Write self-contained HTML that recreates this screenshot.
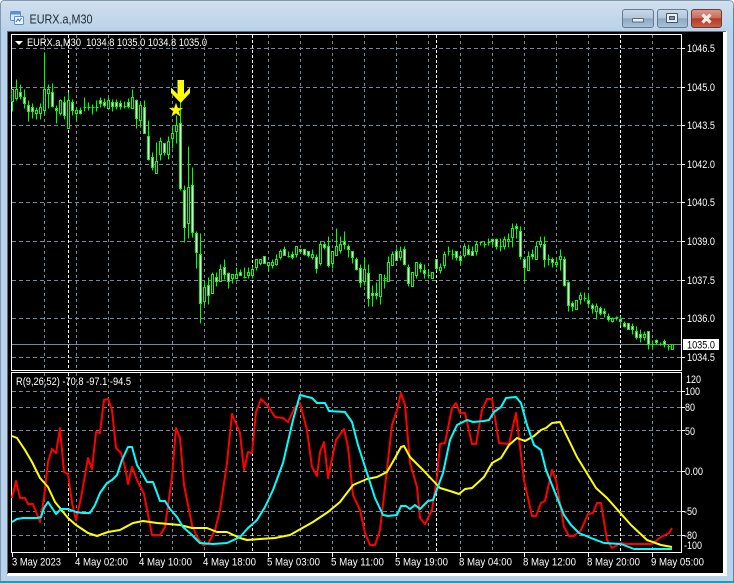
<!DOCTYPE html>
<html><head><meta charset="utf-8"><style>
html,body{margin:0;padding:0;background:#fff;width:734px;height:583px;overflow:hidden}
svg{display:block}
text{font-family:"Liberation Sans",sans-serif;font-size:11px;fill:#fff}
</style></head><body>
<svg width="734" height="583" viewBox="0 0 734 583" xmlns="http://www.w3.org/2000/svg">
<defs>
<linearGradient id="tb" x1="0" y1="0" x2="0" y2="1"><stop offset="0" stop-color="#d7e3ee"/><stop offset=".06" stop-color="#cfdeec"/><stop offset="1" stop-color="#b9d2ea"/></linearGradient>
<linearGradient id="bt" x1="0" y1="0" x2="0" y2="1"><stop offset="0" stop-color="#c9d9e9"/><stop offset=".48" stop-color="#b2c6db"/><stop offset=".5" stop-color="#8ea6bf"/><stop offset="1" stop-color="#a9c3dc"/></linearGradient>
<linearGradient id="cl" x1="0" y1="0" x2="0" y2="1"><stop offset="0" stop-color="#dc9a8e"/><stop offset=".48" stop-color="#c86a5a"/><stop offset=".5" stop-color="#b23a26"/><stop offset="1" stop-color="#c9604a"/></linearGradient>
</defs>
<rect width="734" height="583" fill="#fff"/>
<path d="M4 .5H729Q733.5 .5 733.5 5V582.5H.5V5Q.5 .5 4 .5Z" fill="#b9d2ea" stroke="#7d99b3"/>
<path d="M4 1H729Q733 1 733 5V32H1V5Q1 1 4 1Z" fill="url(#tb)"/>
<rect x="0" y="581" width="734" height="2" fill="#1f9cb0"/>
<rect x="733" y="8" width="1" height="575" fill="#2a9db5"/>
<rect x="7" y="31" width="720" height="545" fill="#fff"/>
<rect x="7" y="31" width="719" height="1" fill="#5d6d7e"/>
<rect x="7" y="31" width="1" height="543" fill="#5d6d7e"/>
<rect x="8" y="32" width="715" height="541" fill="#000"/>

<!-- title -->
<g>
<rect x="10.5" y="11.5" width="10" height="9" rx="1" fill="#dbe9f8" stroke="#5b8fd0"/>
<rect x="11" y="12" width="9" height="2.5" fill="#5b8fd0"/>
<rect x="14.5" y="16.5" width="9" height="8" rx="1" fill="#f2f7fc" stroke="#5b8fd0"/>
<path d="M16 22l2-3 1.5 2 2-3" fill="none" stroke="#3c70b8"/>
</g>
<text x="29.5" y="23.5" style="font-size:13px;fill:#222b35" textLength="63" lengthAdjust="spacingAndGlyphs">EURX.a,M30</text>

<!-- buttons -->
<rect x="622.5" y="9.5" width="31" height="18" rx="2.5" fill="url(#bt)" stroke="#66798f"/>
<rect x="632.5" y="18.5" width="11" height="3.5" rx=".5" fill="#e9eef3" stroke="#56677a"/>
<rect x="657.5" y="9.5" width="30" height="18" rx="2.5" fill="url(#bt)" stroke="#66798f"/>
<rect x="666.5" y="13.5" width="11" height="9" rx=".5" fill="#e9eef3" stroke="#44566a"/>
<rect x="669.5" y="16.5" width="5" height="3" fill="#7f95ab" stroke="#44566a"/>
<rect x="691.5" y="9.5" width="30" height="18" rx="2.5" fill="url(#cl)" stroke="#6a3a34"/>
<path d="M702.5 14.5l8 8M710.5 14.5l-8 8" fill="none" stroke="#f3eeea" stroke-width="3.2"/>

<!-- panels -->
<path d="M11.5 34.5H681.5V370.5H11.5ZM11.5 372.5H681.5V552.5H11.5Z" fill="none" stroke="#fff"/>

<!-- grid -->
<g fill="none" stroke="#778899" stroke-dasharray="4 3">
<path d="M12 48.5H681M12 87.5H681M12 125.5H681M12 164.5H681M12 202.5H681M12 241.5H681M12 280.5H681M12 318.5H681M12 357.5H681"/>
<path d="M12 391.5H681M12 407.5H681M12 430.5H681M12 471.5H681M12 511.5H681M12 535.5H681"/>
<path stroke-dasharray="3 3" d="M44.5 35V370M76.5 35V370M108.5 35V370M140.5 35V370M172.5 35V370M204.5 35V370M236.5 35V370M268.5 35V370M300.5 35V370M332.5 35V370M364.5 35V370M396.5 35V370M428.5 35V370M460.5 35V370M492.5 35V370M524.5 35V370M556.5 35V370M588.5 35V370M652.5 35V370"/>
<path stroke-dasharray="3 3" d="M44.5 373V552M76.5 373V552M108.5 373V552M140.5 373V552M172.5 373V552M204.5 373V552M236.5 373V552M268.5 373V552M300.5 373V552M332.5 373V552M364.5 373V552M396.5 373V552M428.5 373V552M460.5 373V552M492.5 373V552M524.5 373V552M556.5 373V552M588.5 373V552M652.5 373V552"/>
<path stroke="#fff" stroke-dasharray="3 2" d="M68.5 35V370M252.5 35V370M436.5 35V370M620.5 35V370M68.5 373V552M252.5 373V552M436.5 373V552M620.5 373V552"/>
</g>
<path d="M12 344.5H681" stroke="#778899"/>

<!-- candles -->
<g transform="translate(.5 .5)">
<path fill="none" stroke="#0f0" d="M12 89V111M16 79V100M20 84V99M24 89V108M28 100V121M32 103V118M36 107V119M40 103V119M44 52V115M48 84V108M52 83V107M56 105V123M60 99V115M64 96V119M68 92V128M72 99V115M76 107V120M80 107V114M84 97V111M88 102V110M92 104V114M96 100V111M100 97V107M104 98V107M108 97V108M112 99V111M116 99V109M120 100V109M124 101V108M128 98V108M132 89V107M136 99V128M140 102V125M144 100V133M148 120V160M152 152V170M156 142V173M160 137V160M164 143V155M168 136V159M172 125V148M176 115V143M180 100V190M184 185V242M188 146V238M192 167V237M196 231V268M200 233V323M204 280V305M208 277V304M212 272V293M216 272V286M220 264V281M224 259V279M228 272V288M232 274V283M236 267V278M240 269V275M244 267V278M248 267V278M252 266V278M256 259V270M260 259V265M264 256V263M268 262V271M272 259V268M276 254V265M280 249V259M284 246V255M288 251V257M292 251V259M296 246V257M300 249V253M304 249V255M308 251V257M312 249V259M316 254V273M320 241V265M324 241V249M328 236V267M332 251V268M336 228V255M340 236V253M344 231V249M348 244V257M352 251V263M356 257V270M360 264V287M364 258V285M368 264V306M372 285V306M376 282V299M380 274V304M384 274V288M388 256V281M392 251V265M396 248V260M400 246V260M404 246V265M408 264V286M412 272V286M416 262V278M420 262V272M424 264V278M428 269V278M432 272V278M436 259V270M440 263V273M444 251V268M448 246V255M452 249V259M456 251V260M460 254V265M464 243V257M468 244V255M472 246V255M476 241V255M480 241V245M484 241V247M488 238V245M492 238V246M496 238V249M500 238V251M504 236V249M508 233V247M512 223V247M516 223V238M520 226V259M524 257V281M528 251V270M532 249V259M536 241V259M540 236V247M544 236V267M548 254V265M552 257V267M556 257V267M560 249V270M564 256V286M568 281V311M572 301V311M576 300V309M580 292V304M584 292V301M588 294V307M592 303V313M596 303V319M600 306V315M604 308V317M608 313V321M612 317V322M616 316V320M620 316V325M624 321V327M628 323V329M632 323V334M636 326V339M640 329V342M644 331V340M648 331V349M652 340V348M656 339V344M660 342V345M664 339V347M668 344V350M672 344V349M83 107h3M87 107h3M91 107h3M95 107h3M123 106h3M243 277h3M287 256h3M383 278h3M427 275h3M447 251h3M451 254h3M479 242h3M483 244h3M487 242h3M499 246h3M547 259h3M583 298h3M615 317h3M651 344h3M659 344h3M667 346h3"/>
<path fill="#000" stroke="#0f0" d="M11 89h2v12h-2zM15 89h2v9h-2zM35 110h2v3h-2zM39 107h2v6h-2zM43 89h2v21h-2zM47 89h2v4h-2zM59 100h2v13h-2zM67 100h2v28h-2zM75 110h2v3h-2zM107 100h2v8h-2zM131 97h2v11h-2zM139 105h2v15h-2zM155 161h2v12h-2zM159 141h2v13h-2zM167 141h2v13h-2zM171 133h2v5h-2zM175 125h2v6h-2zM187 187h2v36h-2zM203 287h2v14h-2zM211 274h2v19h-2zM219 269h2v12h-2zM231 274h2v4h-2zM235 274h2v4h-2zM247 272h2v3h-2zM251 269h2v6h-2zM255 259h2v8h-2zM259 259h2v4h-2zM267 262h2v3h-2zM271 262h2v3h-2zM275 259h2v5h-2zM279 251h2v6h-2zM295 246h2v8h-2zM311 254h2v3h-2zM319 244h2v19h-2zM331 251h2v12h-2zM335 246h2v9h-2zM339 244h2v6h-2zM363 269h2v12h-2zM379 274h2v22h-2zM387 262h2v19h-2zM391 254h2v11h-2zM399 251h2v6h-2zM411 272h2v14h-2zM415 262h2v13h-2zM431 272h2v6h-2zM439 267h2v3h-2zM443 254h2v11h-2zM463 246h2v9h-2zM475 244h2v7h-2zM503 239h2v7h-2zM507 239h2v2h-2zM511 228h2v9h-2zM527 256h2v14h-2zM535 246h2v13h-2zM539 241h2v3h-2zM555 262h2v2h-2zM559 256h2v3h-2zM575 300h2v9h-2zM579 295h2v4h-2zM595 306h2v5h-2zM611 318h2v3h-2zM643 334h2v3h-2zM671 344h2v5h-2z"/>
<path fill="#fff" stroke="#0f0" d="M19 92h2v4h-2zM23 97h2v6h-2zM27 105h2v6h-2zM31 107h2v4h-2zM51 92h2v14h-2zM55 108h2v2h-2zM63 102h2v13h-2zM71 102h2v8h-2zM79 110h2v3h-2zM99 100h2v3h-2zM103 102h2v3h-2zM111 102h2v4h-2zM115 102h2v4h-2zM119 103h2v3h-2zM127 102h2v4h-2zM135 100h2v18h-2zM143 107h2v26h-2zM147 136h2v23h-2zM151 157h2v10h-2zM163 143h2v9h-2zM179 123h2v65h-2zM183 190h2v37h-2zM191 185h2v47h-2zM195 233h2v19h-2zM199 254h2v49h-2zM207 285h2v10h-2zM215 277h2v4h-2zM223 267h2v7h-2zM227 273h2v8h-2zM239 272h2v3h-2zM263 256h2v7h-2zM283 249h2v6h-2zM291 254h2v3h-2zM299 249h2v2h-2zM303 249h2v5h-2zM307 251h2v4h-2zM315 257h2v11h-2zM323 244h2v3h-2zM327 246h2v19h-2zM343 241h2v3h-2zM347 246h2v3h-2zM351 251h2v6h-2zM355 259h2v10h-2zM359 268h2v14h-2zM367 273h2v25h-2zM371 293h2v2h-2zM375 293h2v2h-2zM395 251h2v9h-2zM403 249h2v15h-2zM407 267h2v16h-2zM419 264h2v4h-2zM423 270h2v3h-2zM435 259h2v9h-2zM455 251h2v6h-2zM459 256h2v4h-2zM467 249h2v5h-2zM471 251h2v4h-2zM491 239h2v2h-2zM495 239h2v7h-2zM515 226h2v2h-2zM519 231h2v25h-2zM523 259h2v8h-2zM531 254h2v2h-2zM543 244h2v15h-2zM551 259h2v3h-2zM563 259h2v26h-2zM567 282h2v23h-2zM571 303h2v3h-2zM587 300h2v3h-2zM591 305h2v3h-2zM599 308h2v5h-2zM603 311h2v2h-2zM607 316h2v3h-2zM619 319h2v2h-2zM623 323h2v3h-2zM627 323h2v6h-2zM631 326h2v3h-2zM635 331h2v6h-2zM639 334h2v3h-2zM647 331h2v13h-2zM655 340h2v2h-2zM663 341h2v3h-2z"/>
</g>

<!-- arrow + star -->
<polygon points="177.5,80 184,80 184,94 190,87.5 190,93 180.7,103 171,93 171,87.5 177.5,94" fill="#ff0"/>
<polygon points="176,103 177.8,108 183,108 178.8,111.2 180.4,116.5 176,113.3 171.6,116.5 173.2,111.2 169,108 174.2,108" fill="#ff0" stroke="#b08a00" stroke-width=".4"/>

<!-- indicator lines -->
<g fill="none" stroke-width="2" stroke-linejoin="round">
<polyline stroke="#f00" points="12,498 16,481 20,498 25,498 28,504 33,504 40,522 44,498 48,462 52,449 56,453 60,428 64,472 68,474 72,503 76,520 81,498 85,475 88,458 92,469 96,432 100,433 104,400 108,399 112,410 116,448 121,453 125,467 128,484 132,467 137,480 144,494 152,535 160,535 165,527 172,477 176,428 180,438 184,485 192,525 197,537 203,545 208,544 215,530 220,510 227,463 232,414 240,433 244,470 248,452 252,453 256,412 261,399 268,406 275,417 283,418 288,422 295,407 300,403 307,430 312,467 317,476 320,452 324,442 328,478 336,440 344,429 348,447 353,495 360,510 365,533 370,545 375,545 380,530 385,487 392,425 397,410 401,393 405,405 410,463 417,487 420,518 425,524 432,510 437,477 440,444 445,443 452,408 456,403 460,413 465,413 472,444 476,444 482,410 487,399 492,399 499,443 509,444 516,413 524,480 532,516 536,516 541,503 545,501 552,470 556,480 564,527 569,536 574,536 581,530 588,514 593,513 597,503 601,503 607,540 612,548 621,543 627,544 641,544 652,544 661,537 669,533 672,528"/>
<polyline stroke="#ff0" points="12,436 17,438 25,450 32,462 40,478 48,487 55,502 68,518 76,525 88,533 97,536 108,532 120,530 133,523 143,521 157,523 180,525 192,528 207,528 217,532 227,532 240,538 247,540 260,539 275,538 290,535 313,522 328,512 340,502 353,485 367,479 377,477 387,472 395,458 401,447 404,446 410,457 423,470 440,488 450,491 459,494 465,489 472,488 484,477 492,463 501,458 509,445 517,438 525,441 534,436 541,430 546,428 552,423 560,422 577,457 596,488 607,498 631,525 647,540 661,545 672,547"/>
<polyline stroke="#0ff" points="12,522 17,519 23,518 37,518 41,517 44,508 48,502 52,508 56,514 61,509 68,509 76,512 83,513 90,513 95,505 100,493 107,483 112,480 117,475 122,460 128,447 132,447 137,465 142,473 147,482 153,482 160,501 165,501 170,509 177,517 183,527 192,535 200,543 213,544 227,543 240,537 248,528 257,520 265,507 273,490 283,463 293,420 300,395 312,398 317,403 325,403 329,411 345,412 352,422 358,445 367,473 375,498 383,515 388,516 397,515 401,506 406,506 410,509 415,505 420,509 428,501 433,500 443,473 450,440 457,425 467,420 473,422 484,421 489,420 494,412 501,407 506,398 516,397 521,403 527,425 534,445 541,450 546,470 556,495 564,515 571,525 579,533 591,538 604,543 621,544 634,549 672,549"/>
</g>

<!-- ticks -->
<path stroke="#fff" d="M682 48.5h3M682 87.5h3M682 125.5h3M682 164.5h3M682 202.5h3M682 241.5h3M682 280.5h3M682 318.5h3M682 357.5h3M682 391.5h3M682 407.5h3M682 430.5h3M682 471.5h3M682 511.5h3M682 535.5h3M12.5 553v4M76.5 553v4M140.5 553v4M204.5 553v4M268.5 553v4M332.5 553v4M396.5 553v4M460.5 553v4M524.5 553v4M588.5 553v4M652.5 553v4"/>

<!-- chart text -->
<polygon points="15,41 23,41 19,45" fill="#fff"/>
<text x="27" y="46" textLength="180" lengthAdjust="spacingAndGlyphs" xml:space="preserve">EURX.a,M30  1034.8 1035.0 1034.8 1035.0</text>
<text x="16" y="385" textLength="115" lengthAdjust="spacingAndGlyphs">R(9,26,52) -70.8 -97.1 -94.5</text>

<g>
<text x="687" y="52" textLength="28" lengthAdjust="spacingAndGlyphs">1046.5</text>
<text x="687" y="91" textLength="28" lengthAdjust="spacingAndGlyphs">1045.0</text>
<text x="687" y="129" textLength="28" lengthAdjust="spacingAndGlyphs">1043.5</text>
<text x="687" y="168" textLength="28" lengthAdjust="spacingAndGlyphs">1042.0</text>
<text x="687" y="206" textLength="28" lengthAdjust="spacingAndGlyphs">1040.5</text>
<text x="687" y="245" textLength="28" lengthAdjust="spacingAndGlyphs">1039.0</text>
<text x="687" y="284" textLength="28" lengthAdjust="spacingAndGlyphs">1037.5</text>
<text x="687" y="322" textLength="28" lengthAdjust="spacingAndGlyphs">1036.0</text>
<text x="687" y="361" textLength="28" lengthAdjust="spacingAndGlyphs">1034.5</text>
</g>
<rect x="683" y="339" width="36" height="11" fill="#fff"/>
<text x="687" y="348.5" textLength="28" lengthAdjust="spacingAndGlyphs" style="fill:#000">1035.0</text>

<g>
<text x="686" y="383" textLength="15" lengthAdjust="spacingAndGlyphs">120</text>
<text x="685" y="395" textLength="15" lengthAdjust="spacingAndGlyphs">100</text>
<text x="685" y="411" textLength="10" lengthAdjust="spacingAndGlyphs">80</text>
<text x="685" y="435" textLength="10" lengthAdjust="spacingAndGlyphs">50</text>
<text x="685" y="475" textLength="18" lengthAdjust="spacingAndGlyphs">0.00</text>
<text x="684" y="515" textLength="13" lengthAdjust="spacingAndGlyphs">-50</text>
<text x="684" y="539" textLength="13" lengthAdjust="spacingAndGlyphs">-80</text>
<text x="684" y="549" textLength="18" lengthAdjust="spacingAndGlyphs">-100</text>
</g>

<g>
<text x="12" y="565.5" textLength="49" lengthAdjust="spacingAndGlyphs">3 May 2023</text>
<text x="75" y="565.5" textLength="53" lengthAdjust="spacingAndGlyphs">4 May 02:00</text>
<text x="139" y="565.5" textLength="53" lengthAdjust="spacingAndGlyphs">4 May 10:00</text>
<text x="203" y="565.5" textLength="53" lengthAdjust="spacingAndGlyphs">4 May 18:00</text>
<text x="267" y="565.5" textLength="53" lengthAdjust="spacingAndGlyphs">5 May 03:00</text>
<text x="331" y="565.5" textLength="53" lengthAdjust="spacingAndGlyphs">5 May 11:00</text>
<text x="395" y="565.5" textLength="53" lengthAdjust="spacingAndGlyphs">5 May 19:00</text>
<text x="459" y="565.5" textLength="53" lengthAdjust="spacingAndGlyphs">8 May 04:00</text>
<text x="523" y="565.5" textLength="53" lengthAdjust="spacingAndGlyphs">8 May 12:00</text>
<text x="587" y="565.5" textLength="53" lengthAdjust="spacingAndGlyphs">8 May 20:00</text>
<text x="651" y="565.5" textLength="53" lengthAdjust="spacingAndGlyphs">9 May 05:00</text>
</g>
</svg>
</body></html>
